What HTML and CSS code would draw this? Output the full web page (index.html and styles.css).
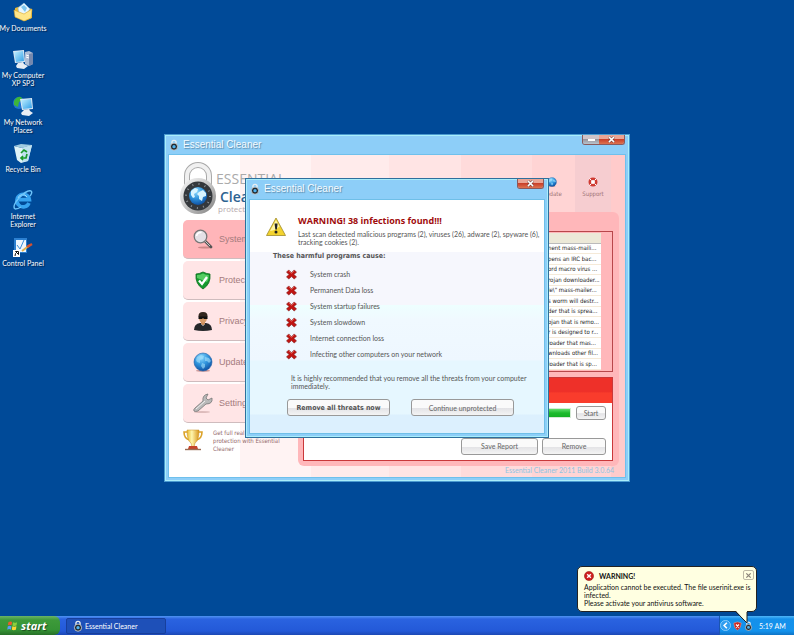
FILE: index.html
```html
<!DOCTYPE html>
<html lang="en">
<head>
    <meta charset="UTF-8">
    <meta name="viewport" content="width=device-width, initial-scale=1.0">
    <title>Essential Cleaner</title>
    <link rel="stylesheet" href="styles.css">
</head>
<body>
    <!-- shared icons -->
    <svg class="defs" width="0" height="0" aria-hidden="true">
        <defs>
            <radialGradient id="sea" cx="40%" cy="25%" r="80%">
                <stop offset="0" stop-color="#8fdcff"/>
                <stop offset="0.5" stop-color="#2f93dc"/>
                <stop offset="1" stop-color="#0b4a9c"/>
            </radialGradient>
            <linearGradient id="metal" x1="0" y1="0" x2="1" y2="1">
                <stop offset="0" stop-color="#fafafa"/>
                <stop offset="0.5" stop-color="#c4c4c4"/>
                <stop offset="1" stop-color="#7d7d7d"/>
            </linearGradient>
            <linearGradient id="screen" x1="0" y1="0" x2="1" y2="1">
                <stop offset="0" stop-color="#c5f1ff"/>
                <stop offset="1" stop-color="#2f9fe8"/>
            </linearGradient>
            <linearGradient id="gold" x1="0" y1="0" x2="1" y2="0">
                <stop offset="0" stop-color="#e9b92c"/>
                <stop offset="0.4" stop-color="#fff6ae"/>
                <stop offset="1" stop-color="#d9961b"/>
            </linearGradient>
            <symbol id="lock" viewBox="0 0 36 52">
                <path d="M7 24V14a11 11 0 0 1 22 0v10" fill="none" stroke="#a9a9a9" stroke-width="6"/>
                <path d="M7 24V14a11 11 0 0 1 22 0v10" fill="none" stroke="#f0f0f0" stroke-width="4"/>
                <circle cx="18" cy="34" r="18" fill="url(#metal)"/>
                <circle cx="18" cy="34" r="14.500" fill="#34383c"/>
                <circle cx="18" cy="34" r="12" fill="none" stroke="#8c9196" stroke-width="2" stroke-dasharray="1 5.300"/>
                <circle cx="18" cy="34" r="9" fill="url(#sea)"/>
                <path d="M11 29l4-3 3 1-1 3-3 2 1 3-2 1-2-3zM19 30l4-2 3 3 0 3-3 1-1 4-3-2 0-3-2-2z" fill="#d8f4ff"/>
            </symbol>
            <symbol id="lock-mini" viewBox="0 0 12 14">
                <path d="M3.500 6V4a2.500 2.500 0 0 1 5 0v2" fill="none" stroke="#e8eef2" stroke-width="1.600"/>
                <circle cx="6" cy="9" r="4.300" fill="#22282e" stroke="#d5dbe0"/>
                <circle cx="6" cy="9" r="2" fill="#4fb2f0"/>
            </symbol>
            <symbol id="cross" viewBox="0 0 12 12">
                <path d="M3 1l3 3 3-3 2.500 2.500-3 2.500 3 2.500L9 11 6 8.300 3 11 .5 8.500l3-2.500-3-2.500z" fill="#c01512" stroke="#7c1412" stroke-width="0.600"/>
                <path d="M3 1.800l3 3 3-3" fill="none" stroke="#ef7d74" stroke-width="0.800"/>
            </symbol>
            <symbol id="globe" viewBox="0 0 20 20">
                <ellipse cx="10" cy="18.800" rx="7" ry="1" fill="#c99"/>
                <circle cx="10" cy="10" r="9" fill="url(#sea)" stroke="#1c5fa8" stroke-width="0.600"/>
                <path d="M4 5l4-2 3 1-1 3-3 1 0 3-3-1-1-2zM12 5l4 1 2 3-2 2-2-2-2 0zM9 11l3 1 0 3-2 2-2-3z" fill="#a5e0fa" opacity="0.600"/>
            </symbol>
            <symbol id="win-x" viewBox="0 0 10 8">
                <path d="M2 1l6 6M8 1L2 7" stroke="#6b3a35" stroke-width="3"/>
                <path d="M2 1l6 6M8 1L2 7" stroke="#fff" stroke-width="1.700"/>
            </symbol>
            <symbol id="alert" viewBox="0 0 12 12">
                <circle cx="6" cy="6" r="5.500" fill="#cf1f1f" stroke="#8d1010" stroke-width="0.600"/>
                <path d="M3.800 3.800l4.400 4.400M8.200 3.800l-4.400 4.400" stroke="#fff" stroke-width="1.700"/>
            </symbol>
        </defs>
    </svg>

    <main class="desktop">
        <nav class="shortcuts">
            <a class="shortcut" href="#">
                <svg viewBox="0 0 20 20">
                    <path d="M2 6l6-2 11 3v9l-7 3-10-4z" fill="#e8b93a"/>
                    <path d="M5 6l6-5 6 6-4 7-7-2z" fill="#e9f7ff" stroke="#87b8d6" stroke-width="0.600"/>
                    <path d="M8 5l3-2 3 3-2 4z" fill="#7fc7ee"/>
                    <path d="M1 8l10 4 8-5-1 9-7 3-9-4z" fill="#ffe68a" stroke="#d7a52c" stroke-width="0.600"/>
                </svg>
                <span>My Documents</span>
            </a>
            <a class="shortcut" href="#">
                <svg viewBox="0 0 20 20">
                    <path d="M12 3l4-1 4 2v11l-4 2-4-2z" fill="#aebdd6"/>
                    <path d="M16 5l4-1v11l-4 2z" fill="#7488ae"/>
                    <path d="M13 6l3 1M13 8l3 1" stroke="#fff"/>
                    <path d="M0 2l11-1 1 12-10 1z" fill="#d9e8f5"/>
                    <path d="M1 3l9-1 1 10-8 1z" fill="url(#screen)"/>
                    <path d="M5 14l5-1 1 2 4 2-4 3-7-1-1-2z" fill="#e8edf4"/>
                </svg>
                <span>My Computer<br>XP SP3</span>
            </a>
            <a class="shortcut" href="#">
                <svg viewBox="0 0 20 20">
                    <circle cx="6" cy="7" r="6" fill="#1f74d0"/>
                    <path d="M1 5q3-5 7-4l2 3-4 2-1 5-4-2z" fill="#3db53a"/>
                    <path d="M7 3l12-1 1 11-11 1z" fill="#d9e8f5"/>
                    <path d="M8 4l10-1 1 9-9 1z" fill="url(#screen)"/>
                    <path d="M11 14l5-1 1 2 3 2-4 3-7-1-1-2z" fill="#e8edf4"/>
                </svg>
                <span>My Network<br>Places</span>
            </a>
            <a class="shortcut" href="#">
                <svg viewBox="0 0 20 20">
                    <path d="M1 3l8 2 10-3-4 16-7 2-4-3z" fill="#dff3f8"/>
                    <path d="M1 3l7-2 11 1-10 3z" fill="#9fcbe0"/>
                    <path d="M9 5l10-3-4 16-6 1z" fill="#bfe1ef"/>
                    <path d="M8 10l3-3 3 2M14 11l-1 4-4 0M10 13l-2 2 2 2" fill="none" stroke="#1a9a2c" stroke-width="1.700"/>
                </svg>
                <span>Recycle Bin</span>
            </a>
            <a class="shortcut" href="#">
                <svg viewBox="0 0 20 20">
                    <path d="M16 13a6.300 6.300 0 1 1 .4-3.400H6" fill="none" stroke="#36a3f0" stroke-width="3.600"/>
                    <path d="M14 7a5 5 0 0 0-9 1" fill="none" stroke="#a8e0ff"/>
                    <path d="M2 19C-3 15 13-1 18 1c1.500 1 .5 3-1 5" fill="none" stroke="#6cc4fa" stroke-width="1.400"/>
                    <path d="M2 19q3 0 6-2" fill="none" stroke="#6cc4fa" stroke-width="1.400"/>
                </svg>
                <span>Internet<br>Explorer</span>
            </a>
            <a class="shortcut" href="#">
                <svg viewBox="0 0 20 20">
                    <path d="M1 1h13v15H1z" fill="#2b7fd0"/>
                    <path d="M3 3h10v12H3z" fill="#eef7ff"/>
                    <path d="M4 8l3 4 4-9" fill="none" stroke="#3b8ed8"/>
                    <path d="M9 14l8-6" stroke="#e2b24c" stroke-width="2"/>
                    <path d="M14 10l5-3" stroke="#d5502f" stroke-width="2.500"/>
                    <path d="M0 13h7v7H0z" fill="#fff"/>
                    <path d="M2 19q0-3 2-4M2.500 14.500h3v3z" stroke="#111" fill="none"/>
                </svg>
                <span>Control Panel</span>
            </a>
        </nav>

        <section class="window cleaner">
            <header class="titlebar">
                <svg class="title-icon"><use href="#lock-mini"/></svg>
                <h1>Essential Cleaner</h1>
                <div class="controls">
                    <button class="minimize" aria-label="Minimize"><i></i></button>
                    <button class="close" aria-label="Close"><svg><use href="#win-x"/></svg></button>
                </div>
            </header>
            <div class="cleaner-body">
                <aside class="sidebar">
                    <div class="brand">
                        <svg class="brand-lock"><use href="#lock"/></svg>
                        <div class="brand-text">
                            <p class="brand-top">ESSENTIAL</p>
                            <p class="brand-name">Clea</p>
                            <p class="brand-tag">protect</p>
                        </div>
                    </div>
                    <nav class="menu">
                        <a class="menu-item active" href="#">
                            <svg viewBox="0 0 20 20">
                                <ellipse cx="12" cy="18.500" rx="7" ry="1" fill="#c88"/>
                                <path d="M12 12l6 6" stroke="#555" stroke-width="2.800" stroke-linecap="round"/>
                                <path d="M12 12l5 5" stroke="#ccc" stroke-width="1"/>
                                <circle cx="7.500" cy="7.500" r="6.300" fill="#e4e1e6" stroke="#777" stroke-width="1.300"/>
                                <path d="M3.500 7q1-4 5-3.500" stroke="#fff" stroke-width="1.600" fill="none"/>
                            </svg>
                            System
                        </a>
                        <a class="menu-item" href="#">
                            <svg viewBox="0 0 20 20">
                                <path d="M10 2q4 2 7 2 1 10-7 15Q2 14 3 4q3 0 7-2z" fill="#149a2e" stroke="#0c6b1d" stroke-width="0.800"/>
                                <path d="M10 3.500q3 1.500 5.700 1.500Q16 9 14 12L4 8V5q3 0 6-1.500z" fill="#56cc62"/>
                                <path d="M6 10.500l3 3.500 5-7" fill="none" stroke="#fff" stroke-width="2.300"/>
                            </svg>
                            Protect
                        </a>
                        <a class="menu-item" href="#">
                            <svg viewBox="0 0 20 20">
                                <path d="M1 19q0-6 6-7h6q6 1 6 7-9 2-18 0z" fill="#25272a"/>
                                <path d="M8 10h4v3l-2 2-2-2z" fill="#c98d5c"/>
                                <ellipse cx="10" cy="7" rx="4" ry="5" fill="#d79c69"/>
                                <path d="M5.500 6Q5 1 10 1t4.500 5z" fill="#33271f"/>
                                <path d="M5.500 5.500h9v2.500h-3.500l-1-1-1 1H5.500z" fill="#111"/>
                                <path d="M8 13l2 2 2-2" fill="none" stroke="#888"/>
                            </svg>
                            Privacy
                        </a>
                        <a class="menu-item" href="#">
                            <svg><use href="#globe"/></svg>
                            Update
                        </a>
                        <a class="menu-item" href="#">
                            <svg viewBox="0 0 20 20">
                                <ellipse cx="9" cy="19" rx="8" ry="1" fill="#dbb"/>
                                <path d="M1 18q-1-1 1-3l8-7Q9 2 15 1l-2 4 2 2 4-2q1 6-6 6l-8 7q-3 1-4 0z" fill="#b9b9b9" stroke="#777" stroke-width="0.800"/>
                                <path d="M3 16l9-8" stroke="#eee"/>
                            </svg>
                            Setting
                        </a>
                    </nav>
                    <div class="promo">
                        <svg viewBox="0 0 20 22">
                            <path d="M5 3H1q0 7 6 8M15 3h4q0 7-6 8" fill="none" stroke="#dca32a" stroke-width="1.600"/>
                            <path d="M4 1h12q0 11-4 13l-1 4H9l-1-4Q4 12 4 1z" fill="url(#gold)" stroke="#c58d20" stroke-width="0.500"/>
                            <path d="M6 17h8l1 3H5z" fill="#c6442a"/>
                            <path d="M2 20.500h16" stroke="#9a6c55" stroke-width="1.400"/>
                        </svg>
                        <p>Get full real<br>protection with Essential Cleaner</p>
                    </div>
                </aside>
                <div class="content">
                    <nav class="toolbar">
                        <a class="tool" href="#">
                            <svg><use href="#globe"/></svg>
                            Update
                        </a>
                        <a class="tool support" href="#">
                            <svg viewBox="0 0 20 20">
                                <circle cx="10" cy="10" r="6.500" fill="#fff" stroke="#cf3b32" stroke-width="5"/>
                                <path d="M3 3l4 4M17 3l-4 4M3 17l4-4M17 17l-4-4" stroke="#fff" stroke-width="2"/>
                            </svg>
                            Support
                        </a>
                    </nav>
                    <div class="panel">
                        <div class="results">
                            <table>
                                <thead><tr><th></th></tr></thead>
                                <tbody>
                                    <tr><td>nent mass-maili...</td></tr>
                                    <tr><td>pens an IRC bac...</td></tr>
                                    <tr><td>ord macro virus ...</td></tr>
                                    <tr><td>rojan downloader...</td></tr>
                                    <tr><td>le\" mass-mailer...</td></tr>
                                    <tr><td>s worm will destr...</td></tr>
                                    <tr><td>der that is sprea...</td></tr>
                                    <tr><td>ojan that is remo...</td></tr>
                                    <tr><td>r is designed to r...</td></tr>
                                    <tr><td>loader that mas...</td></tr>
                                    <tr><td>wnloads other fil...</td></tr>
                                    <tr><td>loader that is sp...</td></tr>
                                </tbody>
                            </table>
                        </div>
                        <div class="scan">
                            <div class="scan-alert"></div>
                            <div class="scan-row">
                                <div class="progress"></div>
                                <button class="btn start-scan">Start</button>
                            </div>
                            <div class="scan-actions">
                                <button class="btn">Save Report</button>
                                <button class="btn">Remove</button>
                            </div>
                        </div>
                    </div>
                    <p class="version">Essential Cleaner 2011 Build 3.0.64</p>
                </div>
            </div>
        </section>

        <section class="window dialog" role="dialog" aria-labelledby="warning-title">
            <header class="titlebar">
                <svg class="title-icon"><use href="#lock-mini"/></svg>
                <h2>Essential Cleaner</h2>
                <div class="controls">
                    <button class="close" aria-label="Close"><svg><use href="#win-x"/></svg></button>
                </div>
            </header>
            <div class="dialog-body">
                <div class="warning">
                    <svg viewBox="0 0 20 20">
                        <path d="M10 1l9.500 17.500H.5z" fill="#f3d32f" stroke="#a08c2a" stroke-width="0.800" stroke-linejoin="round"/>
                        <path d="M10 3l3.500 6.500q-4 4-9.500 4.500z" fill="#fff6a6"/>
                        <path d="M8.600 6.500h3l-.7 6H9.300z" fill="#222"/>
                        <circle cx="10" cy="15" r="1.500" fill="#222"/>
                    </svg>
                    <div>
                        <h3 id="warning-title">WARNING! 38 infections found!!!</h3>
                        <p>Last scan detected malicious programs (2), viruses (26), adware (2), spyware (6),<br>tracking cookies (2).</p>
                    </div>
                </div>
                <h4>These harmful programs cause:</h4>
                <ul class="threats">
                    <li><svg><use href="#cross"/></svg>System crash</li>
                    <li><svg><use href="#cross"/></svg>Permanent Data loss</li>
                    <li><svg><use href="#cross"/></svg>System startup failures</li>
                    <li><svg><use href="#cross"/></svg>System slowdown</li>
                    <li><svg><use href="#cross"/></svg>Internet connection loss</li>
                    <li><svg><use href="#cross"/></svg>Infecting other computers on your network</li>
                </ul>
                <p class="advice">It is highly recommended that you remove all the threats from your computer<br>immediately.</p>
                <div class="dialog-actions">
                    <button class="btn primary">Remove all threats now</button>
                    <button class="btn">Continue unprotected</button>
                </div>
            </div>
        </section>
    </main>

    <footer class="taskbar">
        <button class="start">
            <svg viewBox="0 0 12 12">
                <path d="M1.500 2q2-1.500 4-.3L5 5.200Q3 4 1 5.500z" fill="#f0592b"/>
                <path d="M6.500 2q2 1 4.500-.2l-.6 3.700Q8 6.500 6 5.400z" fill="#8bd03c"/>
                <path d="M.8 6.500q2-1.500 4-.3L4.300 10Q2.500 8.800.3 10z" fill="#5a9bf5"/>
                <path d="M5.800 6.400q2 1 4.500 0l-.6 3.700q-2.400 1-4.400 0z" fill="#fbd534"/>
            </svg>
            start
        </button>
        <button class="task">
            <svg><use href="#lock-mini"/></svg>
            Essential Cleaner
        </button>
        <div class="tray">
            <svg class="tray-arrow" viewBox="0 0 12 12">
                <circle cx="6" cy="6" r="5.500" fill="#2f9df0" stroke="#b5e2ff" stroke-width="0.700"/>
                <path d="M7.500 3L4.500 6l3 3" fill="none" stroke="#fff" stroke-width="1.700"/>
            </svg>
            <svg viewBox="0 0 12 12">
                <path d="M6 .5l5 1.500q0 7-5 9.500Q1 9 1 2z" fill="#cf2a22" stroke="#e8b0a8" stroke-width="0.600"/>
                <path d="M4 4l4 4M8 4L4 8" stroke="#fff" stroke-width="1.500"/>
            </svg>
            <svg><use href="#lock-mini"/></svg>
            <time>5:19 AM</time>
        </div>
    </footer>

    <div class="balloon" role="alert">
        <div class="balloon-head">
            <svg><use href="#alert"/></svg>
            <strong>WARNING!</strong>
            <button class="balloon-close" aria-label="Close">
                <svg viewBox="0 0 8 8"><path d="M1.500 1.500l5 5M6.500 1.500l-5 5" stroke="#8a8378" stroke-width="1.400"/></svg>
            </button>
        </div>
        <p>Application cannot be executed. The file userinit.exe is<br>infected.</p>
        <p>Please activate your antivirus software.</p>
        <svg class="tail" viewBox="0 0 14 14">
            <path d="M1 0l11 12V0z" fill="#ffffe1"/>
            <path d="M1 1l11 11V1" fill="none" stroke="#222"/>
        </svg>
    </div>
</body>
</html>
```

FILE: styles.css
```css
* {
    box-sizing: border-box;
}

body {
    display: flex;
    flex-direction: column;
    min-height: 100vh;
    margin: 0;
    overflow: hidden;
    background-color: #004a98;
    color: #555;
    font-family: Lato, "Liberation Sans", sans-serif;
    font-size: 7px;
    line-height: 8px;
}

h1, h2, h3, h4, p, ul {
    margin: 0;
    padding: 0;
}

a {
    color: inherit;
    text-decoration: none;
}

button {
    margin: 0;
    padding: 0;
    border: none;
    background: none;
    color: inherit;
    font: inherit;
    cursor: pointer;
}

svg {
    display: block;
    flex: none;
}

.defs {
    position: absolute;
}

.desktop {
    flex: 1;
}

/* desktop shortcuts */
.shortcuts {
    display: flex;
    flex-direction: column;
    width: 46px;
}

.shortcut {
    display: flex;
    flex-direction: column;
    align-items: center;
    gap: 2px;
    height: 47px;
    padding-top: 2px;
    color: #fff;
    text-align: center;
    text-shadow: 1px 1px 1px #00234d;
    white-space: nowrap;
}

.shortcut svg {
    width: 20px;
    height: 20px;
}

/* windows */
.window {
    position: absolute;
    padding: 0 3px 3px;
    border: 1px solid #4a9ad0;
    background-color: #8dcef8;
    box-shadow: inset 0 0 0 1px #a9eefb;
}

.cleaner {
    left: 164px;
    top: 134px;
    width: 466px;
}

.dialog {
    left: 245px;
    top: 178px;
    width: 304px;
    border-color: #2f6f9c;
}

.titlebar {
    display: flex;
    align-items: center;
    gap: 4px;
    height: 19px;
    padding-left: 1px;
}

.titlebar h1,
.titlebar h2 {
    flex: 1;
    color: #f4fbff;
    font-family: "Liberation Sans", sans-serif;
    font-size: 10px;
    font-weight: normal;
    line-height: 12px;
    text-shadow: 1px 1px 1px #5d89a8;
}

.title-icon {
    width: 10px;
    height: 12px;
}

.controls {
    display: flex;
    align-self: flex-start;
    margin-right: 1px;
    border: 1px solid #8a5a5c;
    border-top: none;
    border-radius: 0 0 3px 3px;
    overflow: hidden;
}

.controls button {
    display: flex;
    align-items: center;
    justify-content: center;
    height: 9px;
}

.controls svg {
    width: 9px;
    height: 7px;
}

.minimize {
    width: 16px;
    background: linear-gradient(#cfc4c8 45%, #98969e 50%, #b9c4cf);
}

.minimize i {
    width: 7px;
    height: 2px;
    background-color: #fff;
}

.close {
    width: 25px;
    background: linear-gradient(#eaa595 45%, #c9412a 50%, #de7350);
}

.btn {
    height: 17px;
    border: 1px solid #999;
    border-radius: 3px;
    background: linear-gradient(#fafafa 50%, #e3e3e6 55%, #f4f4f4);
    color: #666;
    text-align: center;
}

/* main window */
.cleaner-body {
    display: flex;
    border: 1px solid #6fc0ec;
    background: linear-gradient(90deg, #fff 71px, #fff3f3 71px, #fff3f3 142px, #ffebeb 142px, #ffebeb 220px, #ffe4e4 220px, #ffe4e4 292px, #ffdbdb 292px, #ffdbdb 363px, #ffd4d4 363px, #ffd4d4 442px, #ffcbcb 442px);
}

.sidebar {
    width: 129px;
    padding: 7px 0 0 11px;
}

.brand {
    display: flex;
    height: 58px;
}

.brand-lock {
    width: 36px;
    height: 52px;
}

.brand-top {
    padding-top: 9px;
    color: #aaa;
    font-family: "Open Sans", sans-serif;
    font-size: 14px;
    line-height: 16px;
}

.brand-name {
    padding-left: 4px;
    color: #2c6391;
    font-family: "Open Sans", sans-serif;
    font-size: 14px;
    font-weight: 600;
    line-height: 20px;
}

.brand-tag {
    padding-left: 2px;
    color: #b5a9ac;
    font-family: "Open Sans", sans-serif;
    font-size: 8px;
    line-height: 4px;
}

.menu {
    display: flex;
    flex-direction: column;
    gap: 2px;
    padding-left: 3px;
}

.menu-item {
    display: flex;
    align-items: center;
    gap: 6px;
    height: 39px;
    padding-left: 10px;
    border-bottom: 1px solid #cfbcbe;
    border-radius: 5px;
    background-color: #ffe5e6;
    color: #a47b7d;
    font-family: "Liberation Sans", sans-serif;
    font-size: 9px;
}

.menu-item.active {
    background-color: #ffb5b9;
}

.menu-item svg {
    width: 20px;
    height: 20px;
}

.promo {
    display: flex;
    gap: 10px;
    padding: 6px 0 0 3px;
    color: #94696a;
    font-family: "DejaVu Sans Condensed", sans-serif;
    font-size: 6px;
}

.promo p {
    flex: none;
    width: 72px;
}

.promo svg {
    width: 20px;
    height: 22px;
}

.content {
    flex: 1;
    padding-right: 6px;
}

.toolbar {
    display: flex;
    justify-content: flex-end;
    padding-right: 8px;
}

.tool {
    display: flex;
    flex-direction: column;
    align-items: center;
    gap: 3px;
    width: 46px;
    height: 57px;
    padding-top: 22px;
    color: #a07476;
    font-family: "DejaVu Sans Condensed", sans-serif;
    font-size: 6px;
}

.tool svg {
    width: 10px;
    height: 10px;
}

.support {
    width: 36px;
    background-color: #f6cdd0;
}

.panel {
    display: flex;
    flex-direction: column;
    gap: 5px;
    padding: 19px 6px 5px 5px;
    border-radius: 6px;
    background-color: #ffb7ba;
}

.results {
    padding: 1px 11px 1px 3px;
    border: 1px solid #b8474b;
}

.results table {
    width: 100%;
    border-collapse: collapse;
    background-color: #fff;
    color: #222;
}

.results th {
    height: 10px;
    padding: 0;
    border-bottom: 1px solid #bbb;
    background-color: #ece9d8;
}

.results td {
    height: 10px;
    padding: 0 0 0 241px;
    border-bottom: 1px solid #f5ead8;
    font-family: "DejaVu Sans Condensed", sans-serif;
    font-size: 6px;
    white-space: nowrap;
}

.results tr:nth-child(even) td {
    height: 11px;
}

.scan {
    border: 1px solid #c9383a;
    background-color: #fff;
}

.scan-alert {
    height: 25px;
    background: linear-gradient(#ee3029 55%, #f93c2c 60%);
}

.scan-row {
    display: flex;
    align-items: center;
    gap: 5px;
    padding: 3px 6px 0;
}

.progress {
    flex: 1;
    height: 10px;
    border: 1px solid #d5ead5;
    background: linear-gradient(#5fdc6b, #1cba2c 50%, #15b024);
}

.start-scan {
    width: 30px;
    height: 14px;
}

.scan-actions {
    display: flex;
    justify-content: flex-end;
    gap: 4px;
    padding: 18px 6px 5px;
}

.scan-actions .btn {
    width: 77px;
}

.scan-actions .btn + .btn {
    width: 64px;
}

.version {
    padding: 0 5px 3px 0;
    color: #8fc4e2;
    text-align: right;
}

/* warning dialog */
.dialog .titlebar {
    height: 20px;
}

.dialog-body {
    padding: 15px 0 17px 16px;
    border: 1px solid #6fbfe8;
    background: linear-gradient(#fff 52px, #f6f7fd 52px, #f6f7fd 105px, #eeffff 105px, #f0f9ff 120px, #eef7ff 160px, #e6f7ff 161px, #e6f7ff 214px, #dcf0fe 215px);
}

.warning {
    display: flex;
    gap: 12px;
}

.warning svg {
    width: 20px;
    height: 20px;
    margin-top: 2px;
}

.warning h3 {
    margin-bottom: 3px;
    color: #a00b0b;
    font-family: "Open Sans", sans-serif;
    font-size: 9px;
    line-height: 12px;
}

.warning p {
    white-space: nowrap;
}

.dialog h4 {
    padding: 6px 0 6px 7px;
    font-family: "DejaVu Sans Condensed", sans-serif;
    font-size: 7px;
}

.threats {
    padding-left: 20px;
    list-style: none;
}

.threats li {
    display: flex;
    align-items: center;
    gap: 13px;
    height: 16px;
}

.threats svg {
    width: 11px;
    height: 11px;
}

.advice {
    padding: 12px 0 9px 25px;
    white-space: nowrap;
}

.dialog-actions {
    display: flex;
    gap: 21px;
    padding-left: 21px;
}

.dialog-actions .btn {
    width: 103px;
}

.dialog-actions .primary {
    color: #555;
    font-family: "DejaVu Sans Condensed", sans-serif;
    font-weight: bold;
}

/* taskbar */
.taskbar {
    display: flex;
    align-items: stretch;
    height: 19px;
    background: linear-gradient(#4f93f2, #2a63e0 3px, #2359d8 15px, #1c48b4);
    color: #fff;
}

.start {
    display: flex;
    align-items: center;
    gap: 3px;
    width: 60px;
    padding-left: 7px;
    border-radius: 0 6px 6px 0;
    background: linear-gradient(#69b466, #3d9a3a 4px, #359335 14px, #276f27);
    font-family: "Open Sans", sans-serif;
    font-size: 11px;
    font-style: italic;
    font-weight: bold;
    text-shadow: 1px 1px 1px #1c4a1c;
}

.start svg {
    width: 11px;
    height: 12px;
}

.task {
    display: flex;
    align-items: center;
    gap: 2px;
    width: 100px;
    margin: 2px 0 1px 6px;
    padding-left: 6px;
    border: 1px solid #173f9c;
    border-radius: 2px;
    background-color: #1e50b8;
}

.task svg {
    width: 10px;
    height: 12px;
}

.tray {
    display: flex;
    align-items: center;
    gap: 2px;
    width: 75px;
    margin-left: auto;
    background: linear-gradient(#4fb5f7, #1590ea 3px, #1392ec 15px, #0f74c6);
    border-left: 1px solid #1a55b0;
}

.tray svg {
    width: 9px;
    height: 10px;
}

.tray .tray-arrow {
    width: 11px;
    height: 11px;
}

.tray time {
    padding-left: 4px;
}

/* notification balloon */
.balloon {
    position: absolute;
    right: 37px;
    bottom: 23px;
    width: 180px;
    padding: 2px 6px 4px;
    border: 1px solid #222;
    border-radius: 5px;
    background-color: #ffffe1;
    color: #111;
}

.balloon p {
    white-space: nowrap;
}

.balloon-head {
    display: flex;
    align-items: center;
    gap: 5px;
    height: 14px;
}

.balloon-head svg {
    width: 10px;
    height: 10px;
}

.balloon-close {
    display: flex;
    align-items: center;
    justify-content: center;
    width: 11px;
    height: 10px;
    margin: 0 -4px 2px auto;
    border: 1px solid #bdb9a5;
    border-radius: 2px;
}

.balloon-close svg {
    width: 7px;
    height: 7px;
}

.tail {
    position: absolute;
    right: 7px;
    top: 100%;
    width: 14px;
    height: 14px;
}
```
